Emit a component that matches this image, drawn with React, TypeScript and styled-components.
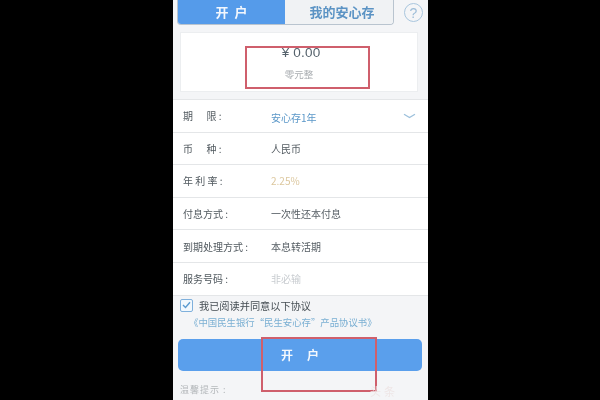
import React from 'react';
import styled, { createGlobalStyle } from 'styled-components';

const GlobalStyle = createGlobalStyle`
  html, body {
    margin: 0;
    padding: 0;
    background: #000;
  }
`;

const Page = styled.div`
  width: 600px;
  height: 400px;
  background: #000;
  display: flex;
  justify-content: center;
  overflow: hidden;
`;

const Phone = styled.div`
  position: relative;
  width: 255px;
  height: 400px;
  margin-left: 1px;
  background: #f4f5f7;
  font-family: 'Noto Sans CJK SC', 'Liberation Sans', sans-serif;
  filter: blur(0.7px);
  overflow: hidden;
`;

const TopBar = styled.div`
  display: flex;
  align-items: center;
  gap: 10px;
  height: 25px;
  padding: 0 5px 0 4px;
  margin-bottom: 7px;
`;

const Tabs = styled.div`
  flex: 1;
  display: flex;
  height: 25px;
  border-radius: 0 0 4px 4px;
  overflow: hidden;
  border: 1px solid #b9c4cf;
  border-top: none;
  box-sizing: border-box;
`;

const Tab = styled.div<{ $active?: boolean }>`
  flex: ${(p) => (p.$active ? '0 0 107px' : 1)};
  display: flex;
  align-items: center;
  justify-content: center;
  box-sizing: border-box;
  padding-left: ${(p) => (p.$active ? '6px' : '6px')};
  padding-bottom: 2px;
  font-size: 13px;
  font-weight: 700;
  letter-spacing: ${(p) => (p.$active ? '6px' : '0')};
  color: ${(p) => (p.$active ? '#f2f7fd' : '#5b93c4')};
  background: ${(p) => (p.$active ? '#559bea' : '#f0f2f4')};
`;

const HelpIcon = styled.div`
  width: 19px;
  height: 19px;
  box-sizing: border-box;
  border: 1.5px solid #a9c6de;
  border-radius: 50%;
  display: flex;
  align-items: center;
  justify-content: center;
  color: #9dbdd8;
  font-family: 'Liberation Sans', sans-serif;
  font-size: 14px;
`;

const BalanceCard = styled.div`
  margin: 0 10px 7px 7px;
  height: 60px;
  box-sizing: border-box;
  background: #fff;
  border: 1px solid #eceef0;
  display: flex;
  flex-direction: column;
  align-items: center;
  padding-top: 11px;
`;

const Amount = styled.div`
  font-family: 'Liberation Sans', sans-serif;
  font-size: 13.5px;
  line-height: 17px;
  letter-spacing: 0.2px;
  color: #55626c;
  margin-left: 4px;
`;

const AmountLabel = styled.div`
  margin-top: 7px;
  font-size: 9.5px;
  line-height: 13px;
  color: #a9adb1;
`;

const Rows = styled.div`
  background: #fff;
  border-top: 1px solid #e4e6e8;
`;

const Row = styled.div`
  display: flex;
  align-items: center;
  height: 32.6px;
  box-sizing: border-box;
  padding: 0 12px 0 10px;
  border-bottom: 1px solid #e4e6e8;
  font-size: 10px;
`;

const RowLabel = styled.div`
  flex: 0 0 88px;
  color: #50585e;
  white-space: pre;
`;

const RowValue = styled.div<{ $tone?: 'link' | 'rate' | 'hint' }>`
  flex: 1;
  padding-top: ${(p) => (p.$tone === 'link' ? '4px' : '0')};
  color: ${(p) =>
    p.$tone === 'link' ? '#5a97c8' : p.$tone === 'rate' ? '#dcc79e' : p.$tone === 'hint' ? '#c8ccd0' : '#555d63'};
`;

const Agreement = styled.div`
  padding: 1px 0 0 7px;
`;

const CheckLine = styled.div`
  display: flex;
  align-items: center;
  gap: 6px;
  height: 17px;
  font-size: 10.2px;
  color: #454d53;
`;

const CheckBox = styled.div`
  width: 11px;
  height: 11px;
  border: 1px solid #7fb0dc;
  border-radius: 2px;
  display: flex;
  align-items: center;
  justify-content: center;
  background: #f2f8fd;
`;

const AgreementLink = styled.div`
  margin: 1px 0 0 9px;
  font-size: 9.4px;
  line-height: 15px;
  color: #7aafd3;
  white-space: nowrap;
`;

const OpenButton = styled.div`
  margin: 9px 6px 0 5px;
  height: 32px;
  box-sizing: border-box;
  padding-left: 14px;
  border-radius: 5px;
  background: #5a9fec;
  color: #f4f8fd;
  font-size: 12px;
  font-weight: 700;
  letter-spacing: 14px;
  display: flex;
  align-items: center;
  justify-content: center;
`;

const Hint = styled.div`
  margin: 12px 0 0 7px;
  font-size: 9px;
  line-height: 14px;
  letter-spacing: 1px;
  color: #b4b8bb;
`;

const Annotation = styled.div<{ $left: number; $top: number; $w: number; $h: number }>`
  position: absolute;
  left: ${(p) => p.$left}px;
  top: ${(p) => p.$top}px;
  width: ${(p) => p.$w}px;
  height: ${(p) => p.$h}px;
  box-sizing: border-box;
  border: 2px solid #cf5f6c;
`;

const Watermark = styled.div`
  position: absolute;
  left: 197px;
  top: 383px;
  font-size: 11px;
  color: #eee6e6;
  letter-spacing: 3px;
`;

const rows: { label: string; value: string; tone?: 'link' | 'rate' | 'hint'; chevron?: boolean }[] = [
  { label: '期      限 :', value: '安心存1年', tone: 'link', chevron: true },
  { label: '币      种 :', value: '人民币' },
  { label: '年 利 率 :', value: '2.25%', tone: 'rate' },
  { label: '付息方式 :', value: '一次性还本付息' },
  { label: '到期处理方式 :', value: '本息转活期' },
  { label: '服务号码 :', value: '非必输', tone: 'hint' },
];

export default function App() {
  return (
    <Page>
      <GlobalStyle />
      <Phone>
        <TopBar>
          <Tabs>
            <Tab $active>开户</Tab>
            <Tab>我的安心存</Tab>
          </Tabs>
          <HelpIcon>?</HelpIcon>
        </TopBar>
        <BalanceCard>
          <Amount>¥ 0.00</Amount>
          <AmountLabel>零元整</AmountLabel>
        </BalanceCard>
        <Rows>
          {rows.map((r) => (
            <Row key={r.label}>
              <RowLabel>{r.label}</RowLabel>
              <RowValue $tone={r.tone}>{r.value}</RowValue>
              {r.chevron && (
                <svg width="13" height="6" viewBox="0 0 13 6" fill="none">
                  <path d="M1 1.2 L6.5 4.6 L12 1.2" stroke="#9cc0dc" strokeWidth="1.2" />
                </svg>
              )}
            </Row>
          ))}
        </Rows>
        <Agreement>
          <CheckLine>
            <CheckBox>
              <svg width="9" height="8" viewBox="0 0 9 8" fill="none">
                <path d="M1 4 L3.5 6.4 L8 1.2" stroke="#5b9bd0" strokeWidth="1.4" />
              </svg>
            </CheckBox>
            我已阅读并同意以下协议
          </CheckLine>
          <AgreementLink>《中国民生银行“民生安心存”产品协议书》</AgreementLink>
        </Agreement>
        <OpenButton>开户</OpenButton>
        <Hint>温馨提示 :</Hint>
        <Annotation $left={72} $top={46} $w={125} $h={43} />
        <Annotation $left={88} $top={337} $w={116} $h={55} />
        <Watermark>头条</Watermark>
      </Phone>
    </Page>
  );
}
